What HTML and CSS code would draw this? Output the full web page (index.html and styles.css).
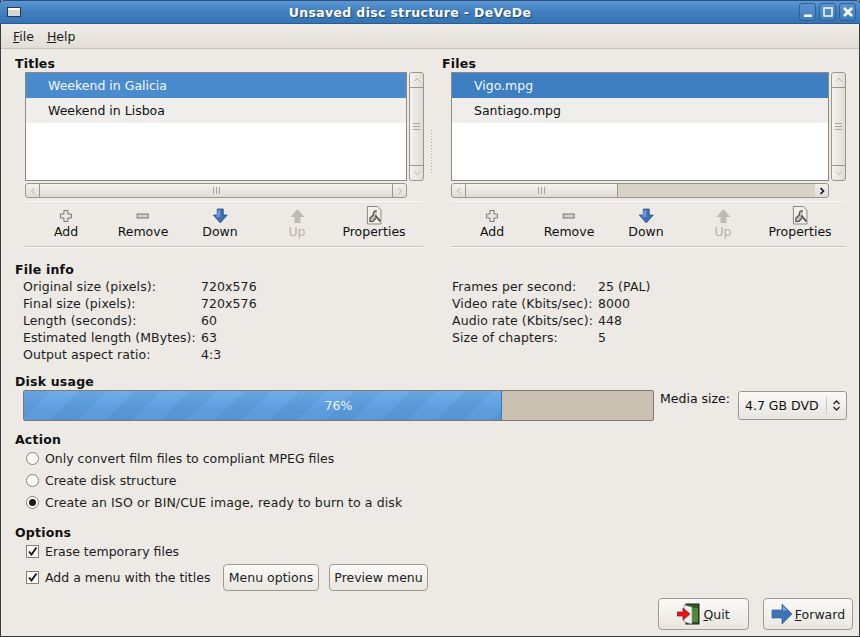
FILE: index.html
```html
<!DOCTYPE html>
<html lang="en">

<head>
    <meta charset="UTF-8">
    <title>Unsaved disc structure - DeVeDe</title>
    <link rel="stylesheet" href="styles.css">
</head>

<body>
    <div class="window">
        <div class="titlebar">
            <span class="win-icon"></span>
            <span class="win-title">Unsaved disc structure - DeVeDe</span>
            <div class="win-btns">
                <span class="win-btn"><svg width="12" height="12" viewBox="0 0 12 12"><rect x="2" y="8.5" width="8" height="2.5" fill="#fff"/></svg></span>
                <span class="win-btn"><svg width="12" height="12" viewBox="0 0 12 12"><rect x="2" y="2" width="8" height="8" fill="none" stroke="#fff" stroke-width="1.5"/></svg></span>
                <span class="win-btn"><svg width="12" height="12" viewBox="0 0 12 12"><path d="M2 2l8 8M10 2l-8 8" stroke="#fff" stroke-width="2.6"/></svg></span>
            </div>
        </div>
        <div class="menubar">
            <span class="menu-item"><u>F</u>ile</span>
            <span class="menu-item"><u>H</u>elp</span>
        </div>

        <div class="content">
            <div class="panes">
                <div class="pane">
                    <h4 class="heading">Titles</h4>
                    <div class="list-row">
                        <ul class="list">
                            <li class="selected">Weekend in Galicia</li>
                            <li class="alt">Weekend in Lisboa</li>
                        </ul>
                        <div class="vscroll">
                            <span class="sb-btn"><svg width="8" height="8" viewBox="0 0 8 8"><path d="M1 5.5L4 2.5L7 5.5" fill="none" stroke="#b5b0a6" stroke-width="1"/></svg></span>
                            <span class="sb-thumb-v"><i></i><i></i><i></i></span>
                            <span class="sb-btn"><svg width="8" height="8" viewBox="0 0 8 8"><path d="M1 2.5L4 5.5L7 2.5" fill="none" stroke="#b5b0a6" stroke-width="1"/></svg></span>
                        </div>
                    </div>
                    <div class="hscroll">
                        <span class="sb-btn-h"><svg width="8" height="8" viewBox="0 0 8 8"><path d="M5.5 1L2.5 4L5.5 7" fill="none" stroke="#b5b0a6" stroke-width="1"/></svg></span>
                        <span class="sb-thumb-h full"><i></i><i></i><i></i></span>
                        <span class="sb-btn-h end"><svg width="8" height="8" viewBox="0 0 8 8"><path d="M2.5 1L5.5 4L2.5 7" fill="none" stroke="#b5b0a6" stroke-width="1"/></svg></span>
                    </div>
                    <div class="toolbar">
                        <div class="tool t-add"><svg class="ico" width="16" height="16" viewBox="0 0 16 16"><path d="M6 2.5h4V6h3.500v4H10v3.500H6V10H2.500V6H6z" fill="#e9e7e2" stroke="#777" stroke-width="1"/></svg>Add</div>
                        <div class="tool t-remove"><svg class="ico" width="16" height="16" viewBox="0 0 16 16"><rect x="2.5" y="6" width="11" height="4" fill="#d3d0c9" stroke="#777" stroke-width="1"/></svg>Remove</div>
                        <div class="tool t-down"><svg class="ico" width="16" height="16" viewBox="0 0 16 16"><path d="M5 1h6v6h4l-7 8-7-8h4z" fill="#3c6fb4" stroke="#2d5490" stroke-width="0.8"/><path d="M6 2h2v7H4z" fill="#6d98d2"/></svg>Down</div>
                        <div class="tool t-up disabled"><svg class="ico" width="16" height="16" viewBox="0 0 16 16"><path d="M8 1l7 8h-4v6H5V9H1z" fill="#bdbbb5"/></svg>Up</div>
                        <div class="tool t-props"><svg class="ico" width="16" height="16" viewBox="0 0 16 16"><path d="M1-1.500h10l3.500 3.500v14H1z" fill="#f0efec" stroke="#8a8a86" stroke-width="1"/><path d="M10.500 3c-2.500-.8-4.200 1.200-3.500 3.700L3.500 10v3.500h3l3.200-3.500" fill="#bdbbb5" stroke="#4e4e4c" stroke-width="1.200"/><path d="M9 7.500l5 6" stroke="#4e4e4c" stroke-width="1.800"/></svg>Properties</div>
                    </div>
                </div>
                <div class="pane-handle"></div>
                <div class="pane">
                    <h4 class="heading">Files</h4>
                    <div class="list-row">
                        <ul class="list">
                            <li class="selected focused">Vigo.mpg</li>
                            <li class="alt">Santiago.mpg</li>
                        </ul>
                        <div class="vscroll">
                            <span class="sb-btn"><svg width="8" height="8" viewBox="0 0 8 8"><path d="M1 5.5L4 2.5L7 5.5" fill="none" stroke="#b5b0a6" stroke-width="1"/></svg></span>
                            <span class="sb-thumb-v"><i></i><i></i><i></i></span>
                            <span class="sb-btn"><svg width="8" height="8" viewBox="0 0 8 8"><path d="M1 2.5L4 5.5L7 2.5" fill="none" stroke="#b5b0a6" stroke-width="1"/></svg></span>
                        </div>
                    </div>
                    <div class="hscroll">
                        <span class="sb-btn-h"><svg width="8" height="8" viewBox="0 0 8 8"><path d="M5.5 1L2.5 4L5.5 7" fill="none" stroke="#b5b0a6" stroke-width="1"/></svg></span>
                        <span class="sb-thumb-h part"><i></i><i></i><i></i></span>
                        <span class="sb-trough"></span>
                        <span class="sb-btn-h end"><svg width="8" height="8" viewBox="0 0 8 8"><path d="M2.5 1L5.5 4L2.5 7" fill="none" stroke="#111" stroke-width="1.6"/></svg></span>
                    </div>
                    <div class="toolbar">
                        <div class="tool t-add"><svg class="ico" width="16" height="16" viewBox="0 0 16 16"><path d="M6 2.5h4V6h3.500v4H10v3.500H6V10H2.500V6H6z" fill="#e9e7e2" stroke="#777" stroke-width="1"/></svg>Add</div>
                        <div class="tool t-remove"><svg class="ico" width="16" height="16" viewBox="0 0 16 16"><rect x="2.5" y="6" width="11" height="4" fill="#d3d0c9" stroke="#777" stroke-width="1"/></svg>Remove</div>
                        <div class="tool t-down"><svg class="ico" width="16" height="16" viewBox="0 0 16 16"><path d="M5 1h6v6h4l-7 8-7-8h4z" fill="#3c6fb4" stroke="#2d5490" stroke-width="0.8"/><path d="M6 2h2v7H4z" fill="#6d98d2"/></svg>Down</div>
                        <div class="tool t-up disabled"><svg class="ico" width="16" height="16" viewBox="0 0 16 16"><path d="M8 1l7 8h-4v6H5V9H1z" fill="#bdbbb5"/></svg>Up</div>
                        <div class="tool t-props"><svg class="ico" width="16" height="16" viewBox="0 0 16 16"><path d="M1-1.500h10l3.500 3.500v14H1z" fill="#f0efec" stroke="#8a8a86" stroke-width="1"/><path d="M10.500 3c-2.500-.8-4.200 1.200-3.500 3.700L3.500 10v3.500h3l3.200-3.500" fill="#bdbbb5" stroke="#4e4e4c" stroke-width="1.200"/><path d="M9 7.500l5 6" stroke="#4e4e4c" stroke-width="1.800"/></svg>Properties</div>
                    </div>
                </div>
            </div>

            <h4 class="heading info-heading">File info</h4>
            <div class="info">
                <div class="info-col left-col">
                    <span>Original size (pixels):</span><span>720x576</span>
                    <span>Final size (pixels):</span><span>720x576</span>
                    <span>Length (seconds):</span><span>60</span>
                    <span>Estimated length (MBytes):</span><span>63</span>
                    <span>Output aspect ratio:</span><span>4:3</span>
                </div>
                <div class="info-col right-col">
                    <span>Frames per second:</span><span>25 (PAL)</span>
                    <span>Video rate (Kbits/sec):</span><span>8000</span>
                    <span>Audio rate (Kbits/sec):</span><span>448</span>
                    <span>Size of chapters:</span><span>5</span>
                </div>
            </div>

            <h4 class="heading usage-heading">Disk usage</h4>
            <div class="usage">
                <div class="progress">
                    <div class="progress-fill" style="width: 76%"></div>
                    <span class="progress-text">76%</span>
                </div>
                <span class="media-label">Media size:</span>
                <div class="combo">
                    <span>4.7 GB DVD</span>
                    <span class="combo-arrows"><svg width="9" height="13" viewBox="0 0 9 13"><path d="M1.5 5l3-3 3 3M1.5 8l3 3 3-3" fill="none" stroke="#222" stroke-width="1.3"/></svg></span>
                </div>
            </div>

            <h4 class="heading action-heading">Action</h4>
            <div class="radios">
                <label class="opt"><span class="radio"></span>Only convert film files to compliant MPEG files</label>
                <label class="opt"><span class="radio"></span>Create disk structure</label>
                <label class="opt opt-wide"><span class="radio checked"></span>Create an ISO or BIN/CUE image, ready to burn to a disk</label>
            </div>

            <h4 class="heading options-heading">Options</h4>
            <label class="opt check-row"><span class="check"><svg width="11" height="11" viewBox="0 0 11 11"><path d="M2 5.500l2.500 3 5-7" fill="none" stroke="#111" stroke-width="1.8"/></svg></span>Erase temporary files</label>
            <div class="menu-row">
                <label class="opt"><span class="check"><svg width="11" height="11" viewBox="0 0 11 11"><path d="M2 5.500l2.500 3 5-7" fill="none" stroke="#111" stroke-width="1.8"/></svg></span>Add a menu with the titles</label>
                <button class="btn btn-menu">Menu options</button>
                <button class="btn btn-preview">Preview menu</button>
            </div>

            <div class="actions">
                <button class="btn btn-big btn-quit">
                    <svg width="24" height="24" viewBox="0 0 24 24">
                        <rect x="9" y="2" width="13" height="20" fill="#2f5a22" stroke="#1c1c16" stroke-width="1"/>
                        <rect x="15" y="6" width="6" height="14" fill="#4f8a3c"/>
                        <path d="M7 3l8 2v17l-8-2z" fill="#f2f2ee" stroke="#888" stroke-width=".7"/>
                        <path d="M0 10h6V6l7 6-7 6v-4H0z" fill="#e8121a" stroke="#a00c10" stroke-width=".7"/>
                    </svg>
                    <span><u>Q</u>uit</span>
                </button>
                <button class="btn btn-big btn-forward">
                    <svg width="22" height="22" viewBox="0 0 22 22">
                        <path d="M1 7h10V1l10 10-10 10v-6H1z" fill="#3f73b8" stroke="#335f99" stroke-width=".7"/>
                        <path d="M2 8h10V3l4 4-5 1H2z" fill="#7ea6da"/>
                    </svg>
                    <span><u>F</u>orward</span>
                </button>
            </div>
        </div>
    </div>
</body>

</html>
```

FILE: styles.css
```css
* {
    margin: 0;
    padding: 0;
    box-sizing: border-box;
}

ul {
    list-style: none;
}

html,
body {
    width: 860px;
    height: 637px;
    overflow: hidden;
}

body {
    background: #edeae5;
    font-family: "DejaVu Sans", sans-serif;
    font-size: 12.5px;
    color: #101010;
}

.window {
    width: 860px;
    height: 637px;
    display: flex;
    flex-direction: column;
    border-left: 1px solid #3a3a38;
    border-right: 1px solid #3a3a38;
    border-bottom: 1px solid #3a3a38;
    background: #edeae5;
}

/* title bar */
.titlebar {
    height: 24px;
    margin: 0 -1px;
    display: flex;
    align-items: center;
    background: linear-gradient(#5c96d3, #3f7fc0 50%, #3674b3);
    border-top: 1px solid #2a4f7c;
    border-bottom: 1px solid #2b5b90;
    border-radius: 4px 4px 0 0;
}

.win-icon {
    width: 14px;
    height: 10px;
    margin-left: 7px;
    background: linear-gradient(#fff 0 2px, #d8d6d0 2px);
    border: 1px solid #2b3a4c;
}

.win-title {
    flex: 1;
    text-align: center;
    color: #fff;
    font-weight: bold;
    font-size: 12.5px;
    letter-spacing: .35px;
    text-shadow: 1px 1px 1px #24476f;
}

.win-btns {
    display: flex;
    gap: 3px;
    margin-right: 4px;
}

.win-btn {
    width: 17px;
    height: 18px;
    display: flex;
    align-items: center;
    justify-content: center;
    border: 1px solid #2f6197;
    border-radius: 3px;
    background: linear-gradient(#5a94d0, #3d7cbc);
}

/* menu */
.menubar {
    height: 25px;
    display: flex;
    align-items: center;
    gap: 13px;
    padding-left: 12px;
    background: linear-gradient(#f0ede8, #e2ded7);
    border-bottom: 1px solid #c8c4bb;
}

.menu-item {
    color: #1a1a1a;
}

.content {
    flex: 1;
    padding: 0 0 0 14px;
}

h4.heading {
    font-size: 12.5px;
    font-weight: bold;
    line-height: 16px;
    letter-spacing: .2px;
}

/* list panes */
.panes {
    display: flex;
    height: 198px;
    padding-top: 7px;
}

.pane {
    width: 409px;
}

.pane-handle {
    width: 4px;
    height: 46px;
    margin: 73px 7px 0 6px;
    background-image: radial-gradient(#a9a59c .8px, transparent 1px);
    background-size: 3px 3px;
}

.pane:last-child {
    width: 405px;
}

.pane:last-child .heading {
    padding-left: 1px;
}

.list-row {
    display: flex;
    gap: 2px;
    margin-left: 10px;
}

.list {
    flex: 1;
    height: 109px;
    background: #fff;
    border: 1px solid #8f8a7e;
}

.list li {
    height: 25px;
    line-height: 25px;
    padding-left: 22px;
}

.list .selected {
    background: #4a8bce;
    color: #f4f8fc;
}

.list .focused {
    background: #3d7fc1;
}

.list .alt {
    background: #efeeec;
}

.vscroll {
    width: 15px;
    height: 109px;
    display: flex;
    flex-direction: column;
    border: 1px solid #9c978b;
    border-radius: 3px;
    background: linear-gradient(90deg, #f5f3f0, #dfdbd4);
}

.sb-btn {
    height: 14px;
    display: flex;
    align-items: center;
    justify-content: center;
}

.sb-thumb-v {
    flex: 1;
    display: flex;
    flex-direction: column;
    align-items: center;
    justify-content: center;
    gap: 2px;
    border-top: 1px solid #9c978b;
    border-bottom: 1px solid #9c978b;
}

.sb-thumb-v i {
    width: 7px;
    height: 1px;
    background: #a8a499;
}

.hscroll {
    display: flex;
    height: 15px;
    margin: 2px 0 0 10px;
    width: 382px;
    border: 1px solid #9c978b;
    border-radius: 3px;
    background: linear-gradient(#f5f3f0, #dfdbd4);
    overflow: hidden;
}

.pane:last-child .hscroll {
    width: 378px;
}

.sb-btn-h {
    width: 13px;
    display: flex;
    align-items: center;
    justify-content: center;
}

.sb-thumb-h {
    display: flex;
    align-items: center;
    justify-content: center;
    gap: 2px;
    border-left: 1px solid #9c978b;
    border-right: 1px solid #9c978b;
}

.sb-thumb-h.full {
    flex: 1;
}

.sb-thumb-h.part {
    width: 153px;
}

.sb-thumb-h i {
    width: 1px;
    height: 7px;
    background: #a8a499;
}

.sb-trough {
    flex: 1;
    background: #d8d2c7;
}

.toolbar {
    display: flex;
    height: 46px;
    margin: 3px 0 0 10px;
    width: 398px;
    border-top: 1px solid #f8f7f4;
    border-bottom: 1px solid #c9c5bc;
    box-shadow: 0 1px 0 #f8f7f4;
    position: relative;
}

.pane:last-child .toolbar {
    width: 395px;
}

.tool {
    position: absolute;
    top: 6px;
    display: flex;
    flex-direction: column;
    align-items: center;
    line-height: 17px;
    transform: translateX(-50%);
}

.ico {
    margin-bottom: -1px;
    overflow: visible;
}

.t-add { left: 41px; }
.t-remove { left: 118px; }
.t-down { left: 195px; }
.t-up { left: 272px; }
.t-props { left: 349px; }

.disabled {
    color: #b5b2ab;
}

/* file info */
.info-heading {
    margin-top: 15px;
}

.info {
    display: flex;
}

.info-col {
    display: grid;
    grid-auto-rows: 17px;
    line-height: 17px;
    padding-left: 8px;
    color: #1c1c1c;
    letter-spacing: .08px;
}

.left-col {
    width: 429px;
    grid-template-columns: 178px auto;
    justify-content: start;
}

.right-col {
    grid-template-columns: 146px auto;
    justify-content: start;
}

/* disk usage */
.usage-heading {
    margin-top: 11px;
}

.usage {
    display: flex;
    align-items: flex-start;
    padding: 0 12px 0 8px;
}

.progress {
    width: 631px;
    height: 31px;
    position: relative;
    background: #c9c0b2;
    border: 1px solid #7d7a72;
    border-radius: 2px;
    overflow: hidden;
}

.progress-fill {
    height: 100%;
    border-right: 1px solid #3a78b8;
    background:
        repeating-linear-gradient(135deg, rgba(50, 100, 155, .13) 0 19px, transparent 19px 39px),
        linear-gradient(#70aeea, #5f9fe0 55%, #5a9ad9);
}

.progress-text {
    position: absolute;
    left: 0;
    right: 0;
    top: 0;
    line-height: 29px;
    text-align: center;
    color: #eef4fa;
}

.media-label {
    margin: 1px 0 0 6px;
    line-height: 15px;
}

.combo {
    width: 109px;
    height: 29px;
    margin: 1px 0 0 auto;
    display: flex;
    align-items: center;
    justify-content: space-between;
    padding-left: 6px;
    border: 1px solid #9c978b;
    border-radius: 3px;
    background: linear-gradient(#faf9f7, #e8e5df);
}

.combo-arrows {
    width: 20px;
    height: 17px;
    display: flex;
    align-items: center;
    justify-content: center;
    border-left: 1px solid #cfcbc3;
}

/* action + options */
.action-heading {
    margin-top: 11px;
}

.radios {
    margin-top: -1px;
}

.opt {
    display: flex;
    align-items: center;
    height: 22px;
    padding-left: 11px;
    color: #1c1c1c;
}

.opt-wide {
    letter-spacing: .1px;
}

.radio {
    width: 13px;
    height: 13px;
    margin-right: 6px;
    border: 1px solid #85817a;
    border-radius: 50%;
    background: #fdfdfc;
    position: relative;
}

.radio.checked::after {
    content: "";
    position: absolute;
    left: 2px;
    top: 2px;
    width: 7px;
    height: 7px;
    border-radius: 50%;
    background: #1a1a1a;
}

.options-heading {
    margin-top: 12px;
}

.check-row {
    margin-top: -1px;
}

.check {
    width: 13px;
    height: 13px;
    margin-right: 6px;
    display: flex;
    align-items: center;
    justify-content: center;
    border: 1px solid #85817a;
    background: #fdfdfc;
}

.menu-row {
    display: flex;
    align-items: center;
    height: 27px;
    margin-top: 2px;
}

.menu-row .opt {
    width: 208px;
}

.btn {
    font-family: inherit;
    font-size: 12.5px;
    color: #1c1c1c;
    height: 27px;
    border: 1px solid #a09b8f;
    border-radius: 4px;
    background: linear-gradient(#fbfaf8, #e9e6e0);
}

.btn-menu {
    width: 96px;
}

.btn-preview {
    width: 99px;
    margin-left: 10px;
}

.actions {
    display: flex;
    justify-content: flex-end;
    gap: 14px;
    margin-top: 7px;
    padding-right: 6px;
}

.btn-big {
    height: 32px;
    display: flex;
    align-items: center;
    justify-content: center;
    gap: 2px;
}

.btn-quit {
    width: 91px;
}

.btn-forward {
    width: 90px;
}
```
